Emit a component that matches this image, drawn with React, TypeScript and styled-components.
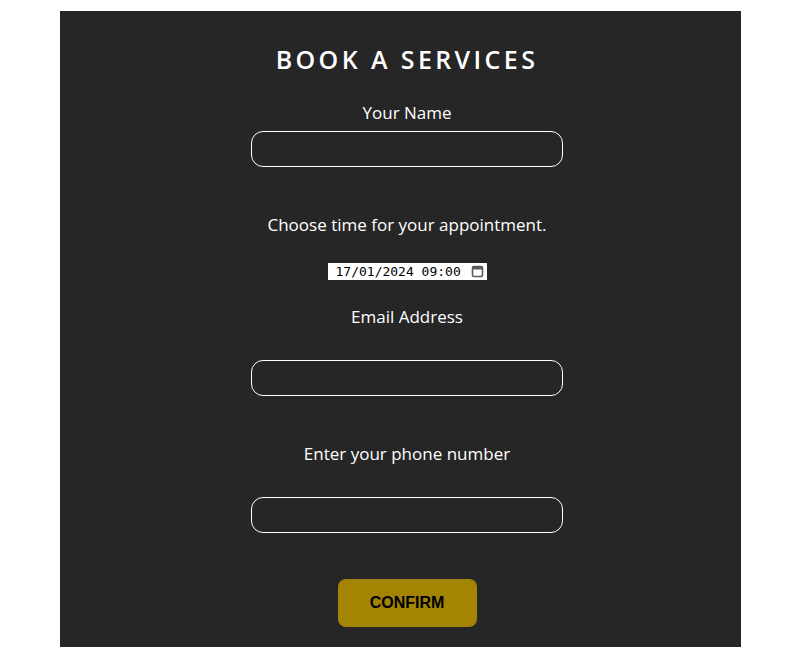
import React from "react";
import styled, { createGlobalStyle } from "styled-components";

const GlobalStyle = createGlobalStyle`
  html, body { margin: 0; padding: 0; background: #ffffff; }
  body { font-family: "Open Sans", "Liberation Sans", sans-serif; }
  * { box-sizing: border-box; }
`;

const Page = styled.div`
  padding: 11px 66px 13px 60px;
`;

const Panel = styled.form`
  background: #262626;
  display: flex;
  flex-direction: column;
  align-items: center;
  padding: 33px 0 20px 13px;
`;

const Title = styled.h1`
  margin: 0;
  font-family: "Open Sans", sans-serif;
  font-weight: 600;
  font-size: 25px;
  line-height: 30px;
  letter-spacing: 3.4px;
  color: #ffffff;
`;

const Label = styled.label<{ $top: number }>`
  margin-top: ${(p) => p.$top}px;
  font-family: "Open Sans", sans-serif;
  font-size: 17px;
  line-height: 24px;
  color: #ffffff;
`;

const TextInput = styled.input<{ $top: number }>`
  margin-top: ${(p) => p.$top}px;
  width: 312px;
  height: 36px;
  border: 1px solid #ffffff;
  border-radius: 12px;
  background: transparent;
  color: #ffffff;
  padding: 0 12px;
  font-size: 15px;
  outline: none;
`;

const DateField = styled.div`
  margin-top: 26px;
  width: 159px;
  height: 17px;
  background: #ffffff;
  display: flex;
  align-items: center;
  justify-content: space-between;
  padding: 0 3px 0 8px;
  font-family: "DejaVu Sans Mono", "Liberation Mono", monospace;
  font-size: 13px;
  color: #000000;
`;

const CalIcon = styled.svg`
  width: 13px;
  height: 13px;
  flex: none;
`;

const Button = styled.button`
  margin-top: 46px;
  width: 139px;
  height: 48px;
  border: none;
  border-radius: 8px;
  background: #a38403;
  color: #000000;
  font-family: "Liberation Sans", Arial, sans-serif;
  font-weight: 700;
  font-size: 16px;
  cursor: pointer;
`;

export default function App() {
  return (
    <>
      <GlobalStyle />
      <Page>
        <Panel onSubmit={(e) => e.preventDefault()}>
          <Title>BOOK A SERVICES</Title>
          <Label $top={27}>Your Name</Label>
          <TextInput $top={6} type="text" />
          <Label $top={46}>Choose time for your appointment.</Label>
          <DateField>
            <span>17/01/2024 09:00</span>
            <CalIcon viewBox="0 0 13 13">
              <rect x="1.5" y="1.5" width="10" height="10" rx="1.5" fill="none" stroke="#5a5a5a" strokeWidth="1.6" />
              <rect x="1.5" y="1.5" width="10" height="3" fill="#5a5a5a" />
            </CalIcon>
          </DateField>
          <Label $top={25}>Email Address</Label>
          <TextInput $top={31} type="email" />
          <Label $top={46}>Enter your phone number</Label>
          <TextInput $top={31} type="tel" />
          <Button type="submit">CONFIRM</Button>
        </Panel>
      </Page>
    </>
  );
}
